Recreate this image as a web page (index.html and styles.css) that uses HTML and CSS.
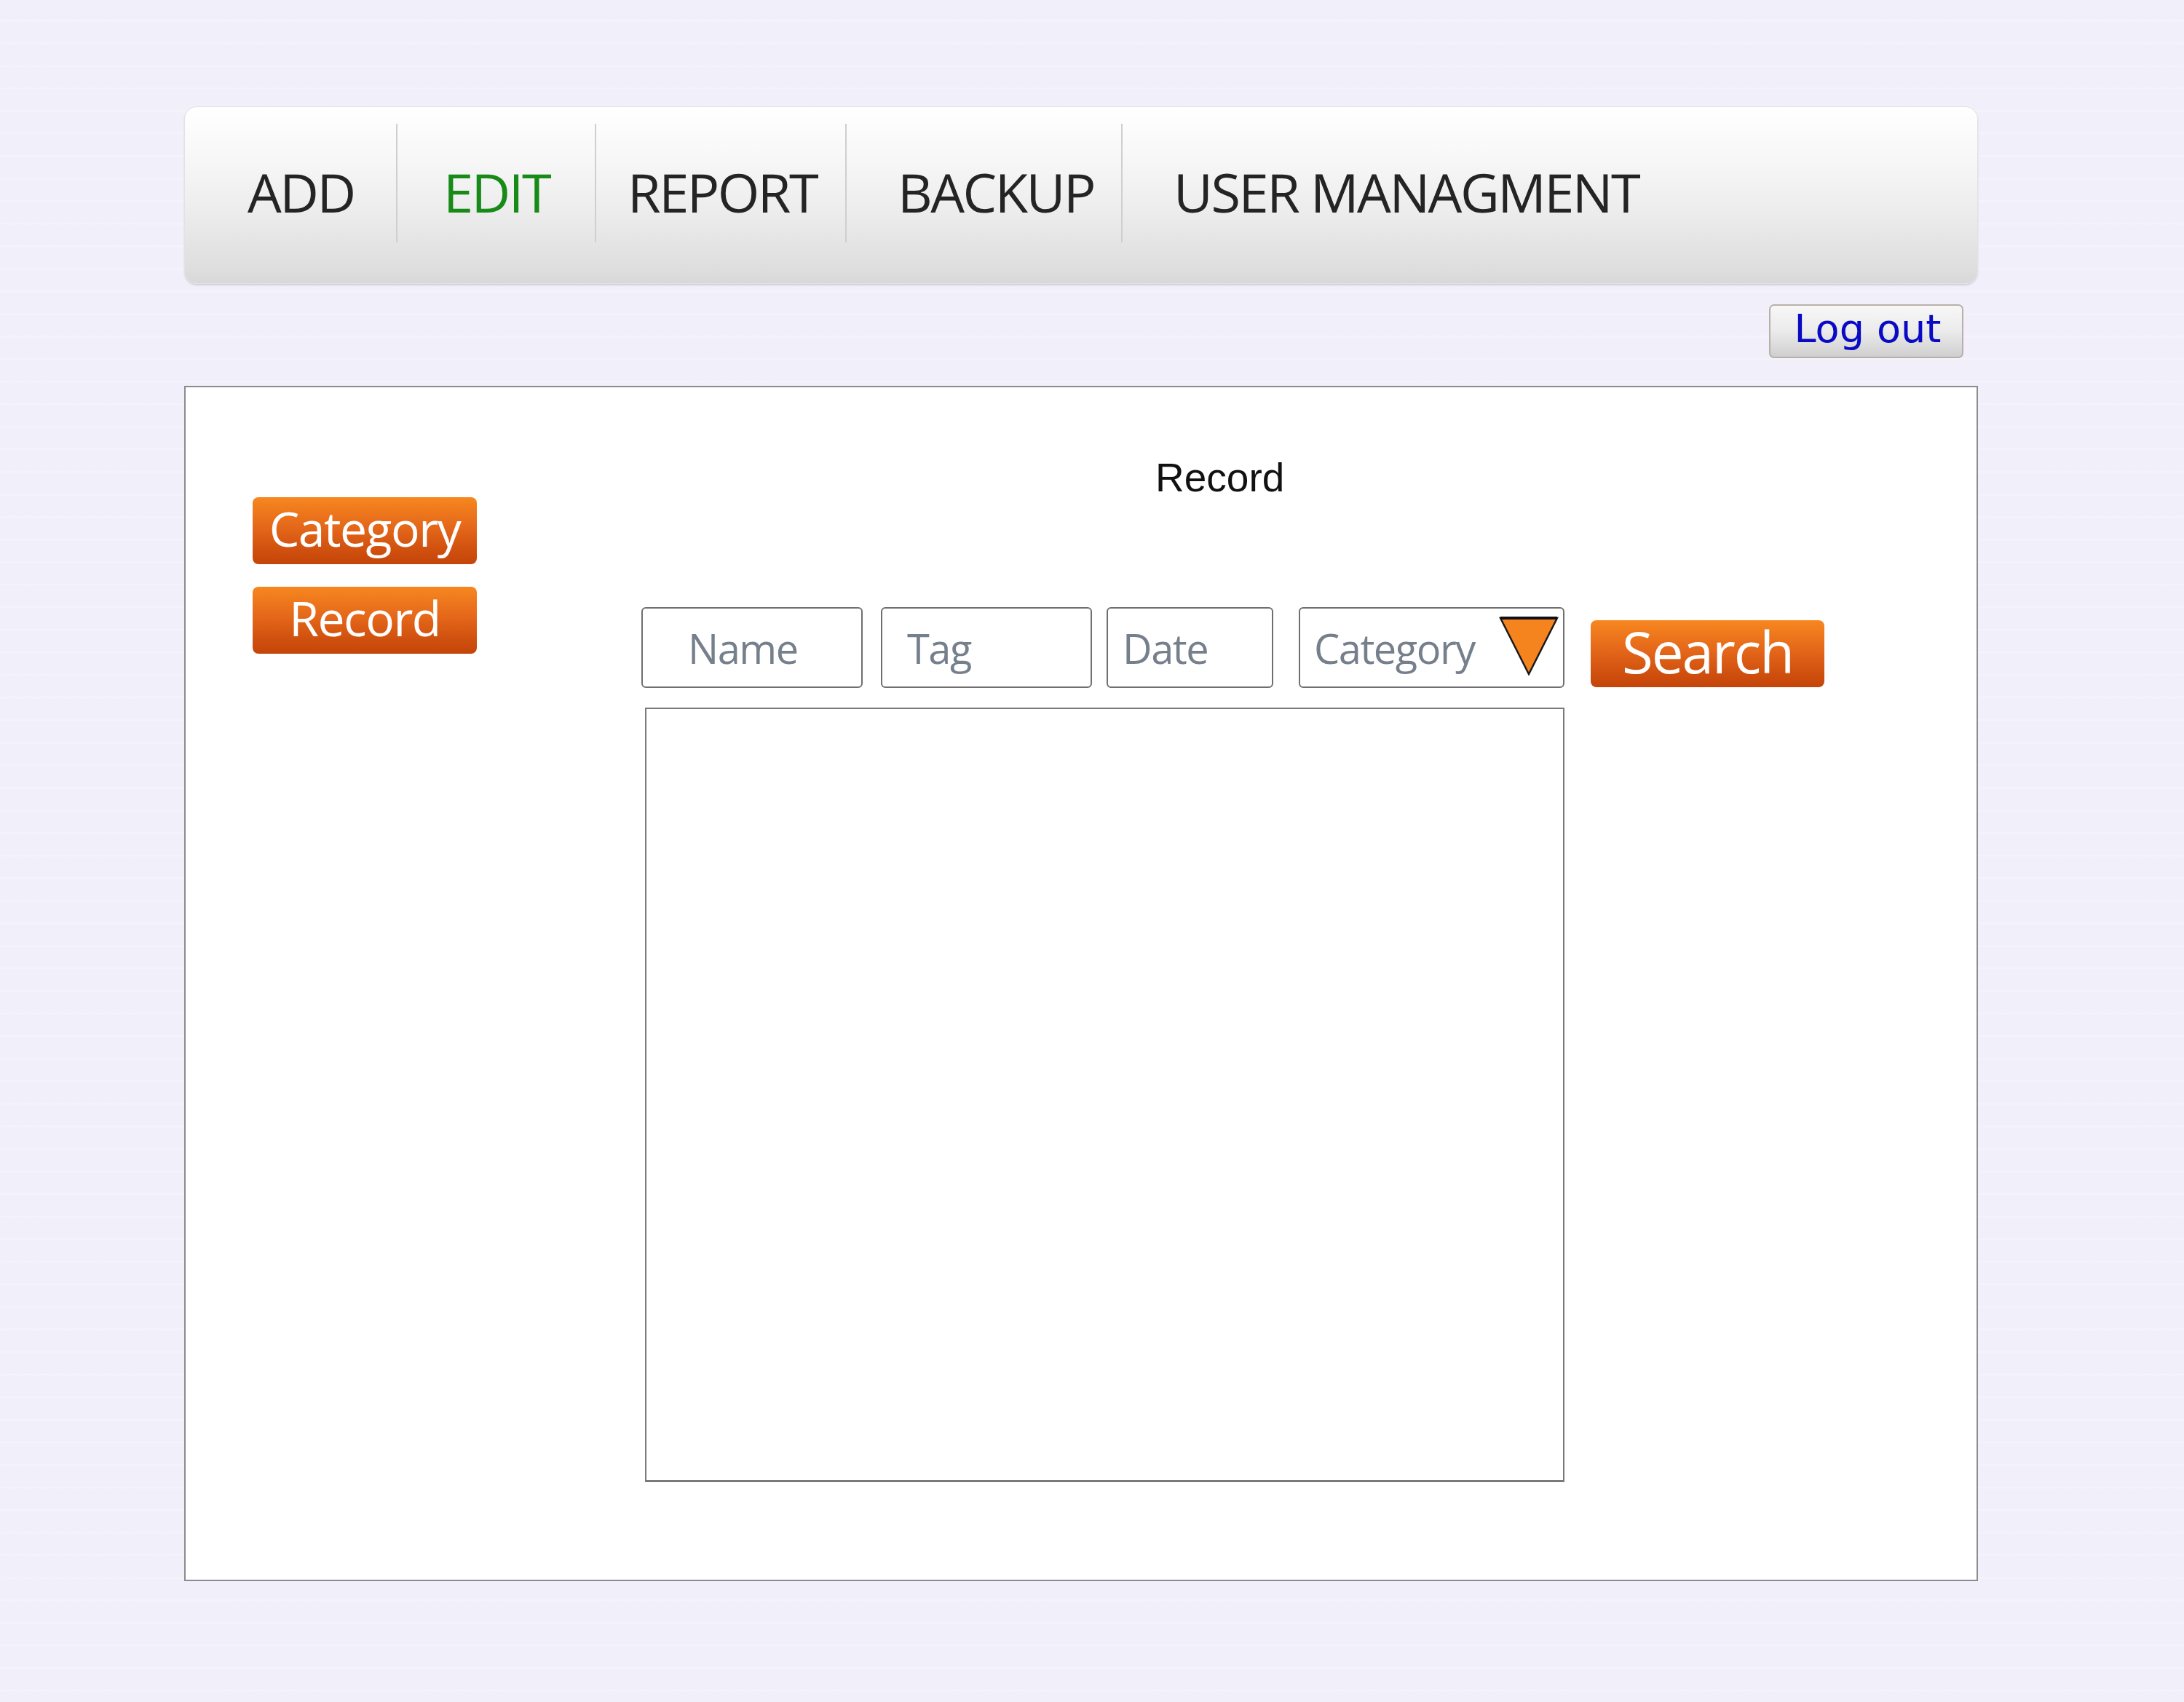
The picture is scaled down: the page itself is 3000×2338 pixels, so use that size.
FILE: index.html
```html
<!DOCTYPE html>
<html lang="en">
<head>
<meta charset="utf-8">
<title>Edit Record</title>
<link rel="stylesheet" href="styles.css">
</head>
<body>
<div class="page">
  <nav class="nav">
    <div class="nav-item nav-item--add">ADD</div>
    <div class="nav-item nav-item--edit nav-item--active">EDIT</div>
    <div class="nav-item nav-item--report">REPORT</div>
    <div class="nav-item nav-item--backup">BACKUP</div>
    <div class="nav-item nav-item--user">USER MANAGMENT</div>
  </nav>
  <div class="toolbar">
    <button class="logout">Log out</button>
  </div>
  <main class="panel">
    <aside class="side">
      <button class="btn-orange btn-side">Category</button>
      <button class="btn-orange btn-side">Record</button>
    </aside>
    <section class="content">
      <h1 class="heading">Record</h1>
      <div class="search-row">
        <div class="field field--name">Name</div>
        <div class="field field--tag">Tag</div>
        <div class="field field--date">Date</div>
        <div class="field field--category">
          <span>Category</span>
          <svg class="tri" viewBox="0 0 82 82" width="82" height="82">
            <polygon points="2,3 80,3 41,80" fill="#f5841f" stroke="#1a1a1a" stroke-width="2.5" stroke-linejoin="miter"/>
            <line x1="2" y1="3" x2="80" y2="3" stroke="#111" stroke-width="4"/>
          </svg>
        </div>
        <button class="btn-orange btn-search">Search</button>
      </div>
      <div class="results"></div>
    </section>
  </main>
</div>
</body>
</html>
```
FILE: styles.css
```css
html, body {
  margin: 0;
  padding: 0;
}
body {
  background-color: #f0effa;
  background-image: repeating-linear-gradient(180deg, #f0effa 0px, #f0effa 26px, #f5f4fc 28px, #f0effa 31px);
  font-family: "Open Sans", "Liberation Sans", sans-serif;
  min-height: 2338px;
}
.page {
  padding: 146px 0 0 253px;
  width: 2464px;
}
.nav {
  box-sizing: border-box;
  height: 244px;
  border-radius: 18px;
  border: 1px solid #e2e2e6;
  background: linear-gradient(180deg, #ffffff 0%, #f7f7f7 30%, #ececec 60%, #dedede 92%, #d8d8d8 100%);
  box-shadow: 0 2px 2px rgba(120, 120, 130, 0.25);
  display: flex;
  align-items: flex-start;
  padding-top: 23px;
}
.nav-item {
  box-sizing: border-box;
  height: 163px;
  padding-top: 57px;
  font-size: 74px;
  line-height: 74px;
  letter-spacing: -2.5px;
  color: #242424;
  white-space: nowrap;
}
.nav-item + .nav-item {
  border-left: 2px solid #cfcfcf;
}
.nav-item--add { width: 290px; padding-left: 86px; }
.nav-item--edit { width: 273px; padding-left: 63px; }
.nav-item--report { width: 344px; padding-left: 43px; }
.nav-item--backup { width: 379px; padding-left: 70px; }
.nav-item--user { padding-left: 70px; }
.nav-item--active { color: #188a18; }

.toolbar {
  display: flex;
  justify-content: flex-end;
  padding-right: 20px;
  margin-top: 28px;
  height: 74px;
}
.logout {
  box-sizing: border-box;
  width: 267px;
  height: 74px;
  border: 2px solid #b9b0aa;
  border-radius: 7px;
  background: linear-gradient(180deg, #f7f7f7 0%, #ebebeb 50%, #cfcfcf 100%);
  color: #0a0ac4;
  font-family: "DejaVu Sans", Verdana, sans-serif;
  font-size: 54px;
  line-height: 60px;
  padding: 0 0 6px 4px;
  cursor: pointer;
}

.panel {
  box-sizing: border-box;
  margin-top: 38px;
  height: 1642px;
  background: #ffffff;
  border: 2px solid #8c8c8c;
  display: flex;
}
.side {
  width: 626px;
  box-sizing: border-box;
  padding: 151px 0 0 92px;
  display: flex;
  flex-direction: column;
  gap: 31px;
}
.btn-orange {
  border: none;
  border-radius: 8px;
  background: linear-gradient(180deg, #f7871f 0%, #e4671a 45%, #cf4f0e 80%, #c4450a 100%);
  color: #ffffff;
  font-family: "Open Sans", "Liberation Sans", sans-serif;
  cursor: pointer;
  padding: 0;
}
.btn-side {
  width: 308px;
  height: 92px;
  font-size: 66px;
  line-height: 80px;
  letter-spacing: -1.5px;
  padding-bottom: 8px;
}
.content {
  display: flex;
  flex-direction: column;
}
.heading {
  margin: 97px 0 0 0;
  padding-left: 706px;
  font-family: "Liberation Sans", Arial, sans-serif;
  font-weight: normal;
  font-size: 55px;
  line-height: 55px;
  color: #111111;
}
.search-row {
  margin-top: 150px;
  display: flex;
  align-items: flex-end;
}
.field {
  box-sizing: border-box;
  height: 111px;
  border: 2px solid #6f6f6f;
  border-radius: 6px;
  display: flex;
  align-items: center;
  font-size: 56px;
  line-height: 56px;
  letter-spacing: -1.5px;
  color: #76808c;
  background: #ffffff;
}
.field--name { width: 304px; padding-left: 62px; margin-right: 25px; }
.field--tag { width: 290px; padding-left: 34px; margin-right: 20px; }
.field--date { width: 229px; padding-left: 20px; margin-right: 35px; }
.field--category {
  width: 365px;
  padding: 0 6px 0 19px;
  justify-content: space-between;
  margin-right: 36px;
}
.tri {
  display: block;
  margin-top: -6px;
}
.btn-search {
  width: 321px;
  height: 92px;
  font-size: 78px;
  line-height: 86px;
  letter-spacing: -2px;
  margin-bottom: 1px;
  padding-bottom: 6px;
}
.results {
  box-sizing: border-box;
  margin: 27px 0 0 5px;
  width: 1263px;
  height: 1064px;
  border: 2px solid #7a7a7a;
  border-bottom-width: 3px;
  background: #ffffff;
}
```
